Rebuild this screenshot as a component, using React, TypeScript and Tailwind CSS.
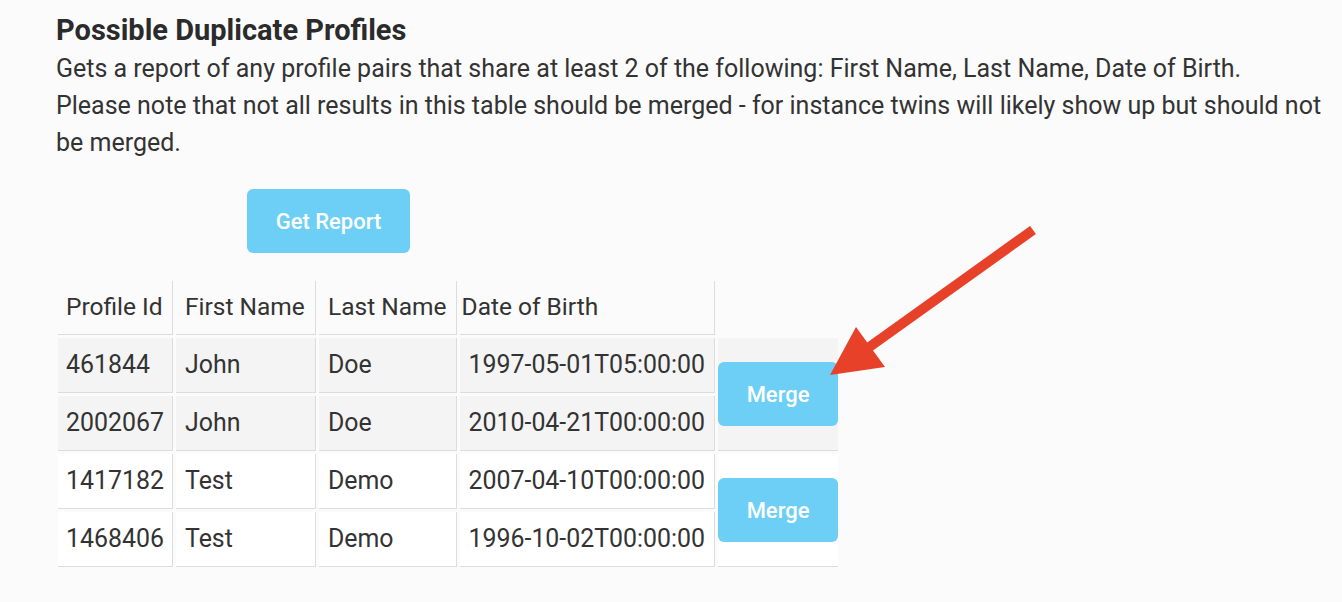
import React from "react";

const rows = [
  { id: "461844", first: "John", last: "Doe", dob: "1997-05-01T05:00:00" },
  { id: "2002067", first: "John", last: "Doe", dob: "2010-04-21T00:00:00" },
  { id: "1417182", first: "Test", last: "Demo", dob: "2007-04-10T00:00:00" },
  { id: "1468406", first: "Test", last: "Demo", dob: "1996-10-02T00:00:00" },
];

export default function App() {
  return (
    <div
      className="relative min-h-[602px] w-full bg-[#fbfbfb] text-[#333333]"
      style={{ fontFamily: "Roboto, 'Noto Sans', sans-serif" }}
    >
      <div className="pl-[56px] pt-[12px]">
        <h1 className="text-[29px] font-bold leading-[36px] text-[#2b2b2b]">Possible Duplicate Profiles</h1>
        <p className="mt-[2px] text-[25px] leading-[37px] pr-[10px]">
          Gets a report of any profile pairs that share at least 2 of the following: First Name, Last Name, Date of Birth.
          <br />
          Please note that not all results in this table should be merged - for instance twins will likely show up but should not be merged.
        </p>
        <button className="ml-[191px] mt-[28px] h-[64px] w-[163px] rounded-[6px] bg-[#6dcff6] text-[22px] font-medium text-white">
          Get Report
        </button>
        <table className="-ml-[1px] mt-[25px] table-fixed border-separate border-spacing-[3px] whitespace-nowrap text-[24.5px]">
          <thead>
            <tr>
              <th className="h-[54px] w-[115px] border-r border-b border-[#dcdcdc] px-[8px] text-left font-normal">Profile Id</th>
              <th className="w-[140px] border-r border-b border-[#dcdcdc] px-[9px] text-left font-normal">First Name</th>
              <th className="w-[137px] border-r border-b border-[#dcdcdc] px-[9px] text-left font-normal">Last Name</th>
              <th className="w-[255px] border-r border-b border-[#dcdcdc] pl-[2px] text-left font-normal">Date of Birth</th>
              <th className="w-[120px] p-0"></th>
            </tr>
          </thead>
          <tbody className="text-[24.9px]">
            {rows.map((r, i) => {
              const bg = i < 2 ? "bg-[#f4f4f4]" : "bg-white";
              return (
                <tr key={r.id}>
                  <td className={`h-[55px] border-r border-b border-[#dcdcdc] px-[8px] ${bg}`}>{r.id}</td>
                  <td className={`border-r border-b border-[#dcdcdc] px-[9px] ${bg}`}>{r.first}</td>
                  <td className={`border-r border-b border-[#dcdcdc] px-[9px] ${bg}`}>{r.last}</td>
                  <td className={`border-r border-b border-[#dcdcdc] px-[9px] ${bg}`}>{r.dob}</td>
                  {i % 2 === 0 && (
                    <td rowSpan={2} className={`border-b border-[#dcdcdc] p-0 align-middle ${bg}`}>
                      <button className="block h-[64px] w-full rounded-[6px] bg-[#6dcff6] text-[22px] font-medium text-white">
                        Merge
                      </button>
                    </td>
                  )}
                </tr>
              );
            })}
          </tbody>
        </table>
      </div>
      <svg className="pointer-events-none absolute left-0 top-0" width="1342" height="602">
        <line x1="1033" y1="230" x2="868" y2="348" stroke="#e8412a" strokeWidth="10" />
        <polygon points="856,327 885,367 830,375" fill="#e8412a" />
      </svg>
    </div>
  );
}
